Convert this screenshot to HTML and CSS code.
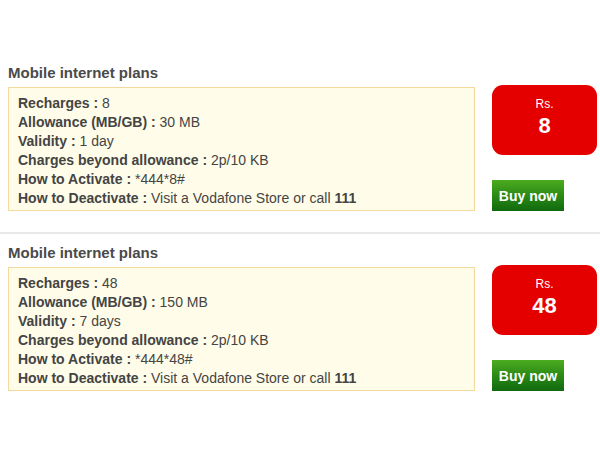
FILE: index.html
```html
<!DOCTYPE html>
<html>
<head>
<meta charset="utf-8">
<link rel="stylesheet" href="styles.css">
</head>
<body>
<div class="plan plan-first">
  <div class="details">
    <h2 class="title">Mobile internet plans</h2>
    <div class="box">
      <div class="row"><b>Recharges :</b> 8</div>
      <div class="row"><b>Allowance (MB/GB) :</b> 30 MB</div>
      <div class="row"><b>Validity :</b> 1 day</div>
      <div class="row"><b>Charges beyond allowance :</b> 2p/10 KB</div>
      <div class="row"><b>How to Activate :</b> *444*8#</div>
      <div class="row"><b>How to Deactivate :</b> Visit a Vodafone Store or call <b>111</b></div>
    </div>
  </div>
  <div class="side">
    <div class="price"><span class="rs">Rs.</span><span class="amt">8</span></div>
    <a class="buy">Buy now</a>
  </div>
</div>
<div class="plan">
  <div class="details">
    <h2 class="title">Mobile internet plans</h2>
    <div class="box">
      <div class="row"><b>Recharges :</b> 48</div>
      <div class="row"><b>Allowance (MB/GB) :</b> 150 MB</div>
      <div class="row"><b>Validity :</b> 7 days</div>
      <div class="row"><b>Charges beyond allowance :</b> 2p/10 KB</div>
      <div class="row"><b>How to Activate :</b> *444*48#</div>
      <div class="row"><b>How to Deactivate :</b> Visit a Vodafone Store or call <b>111</b></div>
    </div>
  </div>
  <div class="side">
    <div class="price"><span class="rs">Rs.</span><span class="amt">48</span></div>
    <a class="buy">Buy now</a>
  </div>
</div>
</body>
</html>
```
FILE: styles.css
```css
html, body { background: #fff; }
body {
  margin: 0;
  padding-top: 54px;
  font-family: "Liberation Sans", Arial, sans-serif;
  color: #444;
}
.plan {
  display: flex;
  gap: 17px;
  padding: 8px 3px 21px 8px;
}
.plan-first { border-bottom: 2px solid #e8e8e8; }
.details { width: 467px; }
.title {
  margin: 2px 0 5px;
  font-size: 15px;
  line-height: 18px;
  font-weight: bold;
  color: #4a4a4a;
}
.box {
  background: #fffde9;
  border: 1px solid #f3d99c;
  padding: 6px 9px 2px;
  font-size: 14px;
  line-height: 19px;
}
.row b { color: #444; }
.side {
  width: 105px;
  padding-top: 23px;
  display: flex;
  flex-direction: column;
  align-items: flex-start;
}
.price {
  width: 105px;
  height: 70px;
  background: #e50000;
  border-radius: 11px;
  color: #fff;
  display: flex;
  flex-direction: column;
  align-items: center;
  padding-top: 12px;
  box-sizing: border-box;
}
.rs { font-size: 12px; line-height: 14px; }
.amt { font-size: 22px; font-weight: bold; line-height: 26px; margin-top: 2px; }
.buy {
  margin-top: 25px;
  width: 72px;
  height: 31px;
  display: flex;
  align-items: center;
  justify-content: center;
  background: linear-gradient(#4dab1f, #2a8a17 50%, #11690e);
  color: #fff;
  font-size: 14px;
  font-weight: bold;
}
```
